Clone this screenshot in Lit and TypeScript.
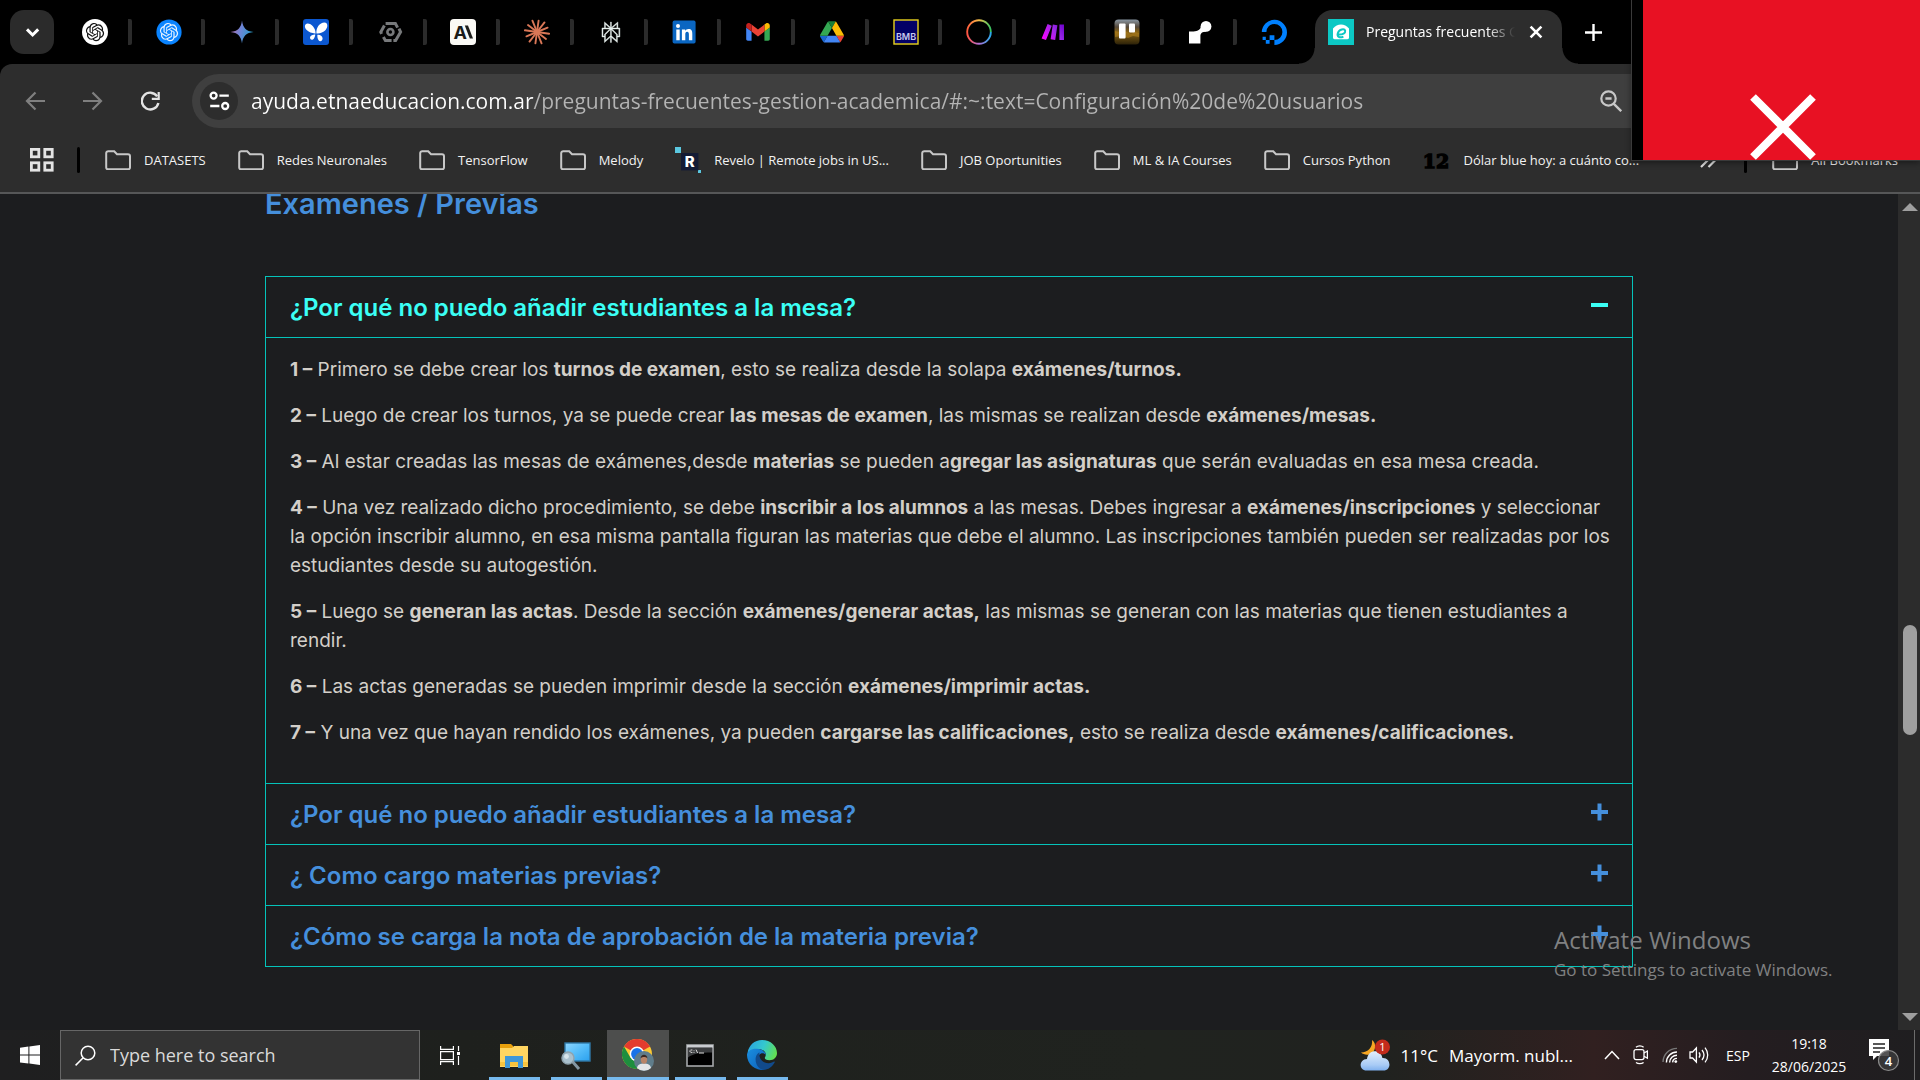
import { LitElement, html, svg, css, nothing, TemplateResult } from "lit";
import { customElement, property, state } from "lit/decorators.js";

const KNOT =
  "M22.2819 9.8211a5.9847 5.9847 0 0 0-.5157-4.9108 6.0462 6.0462 0 0 0-6.5098-2.9A6.0651 6.0651 0 0 0 4.9807 4.1818a5.9847 5.9847 0 0 0-3.9977 2.9 6.0462 6.0462 0 0 0 .7427 7.0966 5.98 5.98 0 0 0 .511 4.9107 6.051 6.051 0 0 0 6.5146 2.9001A5.9847 5.9847 0 0 0 13.2599 24a6.0557 6.0557 0 0 0 5.7718-4.2058 5.9894 5.9894 0 0 0 3.9977-2.9001 6.0557 6.0557 0 0 0-.7475-7.0729zm-9.022 12.6081a4.4755 4.4755 0 0 1-2.8764-1.0408l.1419-.0804 4.7783-2.7582a.7948.7948 0 0 0 .3927-.6813v-6.7369l2.02 1.1686a.071.071 0 0 1 .038.052v5.5826a4.504 4.504 0 0 1-4.4945 4.4944zm-9.6607-4.1254a4.4708 4.4708 0 0 1-.5346-3.0137l.142.0852 4.783 2.7582a.7712.7712 0 0 0 .7806 0l5.8428-3.3685v2.3324a.0804.0804 0 0 1-.0332.0615L9.74 19.9502a4.4992 4.4992 0 0 1-6.1408-1.6464zM2.3408 7.8956a4.485 4.485 0 0 1 2.3655-1.9728V11.6a.7664.7664 0 0 0 .3879.6765l5.8144 3.3543-2.0201 1.1685a.0757.0757 0 0 1-.071 0l-4.8303-2.7865A4.504 4.504 0 0 1 2.3408 7.872zm16.5963 3.8558L13.1038 8.364 15.1192 7.2a.0757.0757 0 0 1 .071 0l4.8303 2.7913a4.4944 4.4944 0 0 1-.6765 8.1042v-5.6772a.79.79 0 0 0-.407-.667zm2.0107-3.0231l-.142-.0852-4.7735-2.7818a.7759.7759 0 0 0-.7854 0L9.409 9.2297V6.8974a.0662.0662 0 0 1 .0284-.0615l4.8303-2.7866a4.4992 4.4992 0 0 1 6.6802 4.66zM8.3065 12.863l-2.02-1.1638a.0804.0804 0 0 1-.038-.0567V6.0742a4.4992 4.4992 0 0 1 7.3757-3.4537l-.142.0805L8.704 5.459a.7948.7948 0 0 0-.3927.6813zm1.0976-2.3654l2.602-1.4998 2.6069 1.4998v2.9994l-2.5974 1.4997-2.6067-1.4997Z";

const PERPLEXITY =
  "M22.3977 7.0896h-2.3106V.0676l-7.5094 6.3542V.1577h-1.1554v6.1966L4.4904 0v7.0896H1.6023v10.3976h2.8882V24l6.932-6.3591v6.2005h1.1554v-6.0469l6.9318 6.1807v-6.4879h2.8882V7.0896zm-3.4657-4.531v4.531h-5.355l5.355-4.531zm-13.2862.0676 4.8691 4.4634H5.6458V2.6262zM2.7576 16.332V8.245h7.8476l-6.1149 6.1147v1.9723H2.7576zm2.8882 5.0404v-3.8852h.0001v-2.6488l5.7763-5.7764v7.0111l-5.7764 5.2993zm12.7086.0248-5.7766-5.1509V9.0618l5.7766 5.7766v6.5588zm2.8882-5.0652h-1.733v-1.9723L13.3948 8.245h7.8478v8.087z";

const burst = Array.from({ length: 12 }, (_, i) => {
  const a = (i * 30 - 82) * (Math.PI / 180);
  const r = i % 2 ? 12.2 : 11.4;
  return svg`<line x1="13" y1="13" x2=${13 + r * Math.cos(a)} y2=${13 + r * Math.sin(a)}></line>`;
});

/* Favicons, all on a 26 unit grid. */
const FAVICONS: { name: string; art: TemplateResult }[] = [
  {
    name: "ChatGPT",
    art: svg`<circle cx="13" cy="13" r="13" fill="#fff"/><g transform="translate(3.9 3.9) scale(.76)"><path d=${KNOT} fill="#111"/></g>`,
  },
  {
    name: "OpenAI",
    art: svg`<circle cx="13" cy="13" r="12.6" fill="#0a84ff"/><g transform="translate(3.9 3.9) scale(.76)"><path d=${KNOT} fill="#e8f3ff"/></g>`,
  },
  {
    name: "Gemini",
    art: svg`<defs><linearGradient id="gem" x1="0" y1="0.4" x2="1" y2="0.7"><stop offset="0" stop-color="#b46fa8"/><stop offset=".4" stop-color="#6f84d6"/><stop offset="1" stop-color="#1ba1c8"/></linearGradient></defs><path d="M13 1.5C13.8 8.6 17.2 12.3 24.5 13 17.2 13.7 13.8 17.4 13 24.5 12.2 17.4 8.8 13.7 1.5 13 8.8 12.3 12.2 8.6 13 1.5z" fill="url(#gem)"/>`,
  },
  {
    name: "Butterfly",
    art: svg`<rect width="26" height="26" rx="3" fill="#0b57d0"/><path d="M12.6 14.4C12.6 9 8.6 4.8 4.6 4.6 1.4 4.8 1.2 8.6 3.4 10.8 5.8 13.2 9.4 14.6 12.6 14.4zM13.4 14.4C13 8.8 16.6 3.8 21.4 3.6 25.2 3.8 25 8.4 22.6 11 20.2 13.6 16.6 14.8 13.4 14.4z" fill="#fff"/><path d="M12.2 15.6C10 15.6 7.2 16.6 7 18.8 7.2 21.2 9.8 21.2 11 19.4 11.9 18 12.2 16.8 12.2 15.6zM14.4 15.8c2.2-.4 5 .8 5.2 3.4 0 3.2-3 4-4.2 1.8-.9-1.6-1.2-3.4-1-5.2z" fill="#fff"/>`,
  },
  {
    name: "Console",
    art: svg`<path d="M8.6 4.6h9.8l2.2 4M22 9.6l1.6 3.4-5 8.6h-2.2M14.6 21.6H8.4l-2-3.6M4.6 14.8L3.8 13l3.6-6.4" fill="none" stroke="#77797b" stroke-width="3"/><circle cx="13.4" cy="13" r="4.3" fill="#77797b"/><circle cx="13.4" cy="13" r="1.7" fill="#000"/>`,
  },
  {
    name: "Anthropic",
    art: svg`<rect width="26" height="26" rx="4" fill="#faf9f5"/><text x="3.4" y="19.5" font-family="Inter, sans-serif" font-weight="700" font-size="18" fill="#1b1b19">A</text><path d="M14.8 6.4h3.2L23 19.5h-3.2z" fill="#1b1b19"/>`,
  },
  { name: "Claude", art: svg`<g stroke="#d97757" stroke-width="1.9" stroke-linecap="round">${burst}</g>` },
  {
    name: "Perplexity",
    art: svg`<g transform="translate(2.6 2.9) scale(.86)"><path d=${PERPLEXITY} fill="#e8f0ee" stroke="#e8f0ee" stroke-width=".5"/></g>`,
  },
  {
    name: "LinkedIn",
    art: svg`<rect x="1.6" y="1.6" width="23" height="23" rx="1.8" fill="#0a66c2"/><circle cx="7" cy="7.1" r="2" fill="#fff"/><path d="M5.3 10.4h3.4v10.8H5.3zM10.9 10.4h3.3v1.5c.7-1.1 1.8-1.8 3.3-1.8 3 0 3.8 2 3.8 4.8v6.3h-3.4v-5.6c0-1.4-.2-2.8-1.8-2.8s-1.8 1.4-1.8 2.8v5.6h-3.4z" fill="#fff"/>`,
  },
  {
    name: "Gmail",
    art: svg`<g transform="translate(1.2 4) scale(.268) translate(-52 -42)"><path fill="#4285f4" d="M58 108h14V74L52 59v43c0 3.32 2.69 6 6 6"/><path fill="#34a853" d="M120 108h14c3.32 0 6-2.69 6-6V59l-20 15"/><path fill="#fbbc04" d="M120 48v26l20-15v-8c0-7.42-8.47-11.65-14.4-7.2"/><path fill="#ea4335" d="M72 74V48l24 18 24-18v26L96 92"/><path fill="#c5221f" d="M52 51v8l20 15V48l-5.6-4.2c-5.94-4.45-14.4-.22-14.4 7.2"/></g>`,
  },
  {
    name: "Drive",
    art: svg`<g transform="translate(1 2.2) scale(.274)"><path d="m6.6 66.85 3.85 6.65c.8 1.4 1.95 2.5 3.3 3.3l13.75-23.8h-27.5c0 1.55.4 3.1 1.2 4.5z" fill="#1967d2"/><path d="m43.65 25-13.75-23.8c-1.35.8-2.5 1.9-3.3 3.3l-25.4 44a9.06 9.06 0 0 0 -1.2 4.5h27.5z" fill="#34a853"/><path d="m73.55 76.8c1.35-.8 2.5-1.9 3.3-3.3l1.6-2.75 7.65-13.25c.8-1.4 1.2-2.95 1.2-4.5h-27.502l5.852 11.5z" fill="#ea4335"/><path d="m43.65 25 13.75-23.8c-1.35-.8-2.9-1.2-4.5-1.2h-18.5c-1.6 0-3.15.45-4.5 1.2z" fill="#188038"/><path d="m59.8 53h-32.3l-13.75 23.8c1.35.8 2.9 1.2 4.5 1.2h50.8c1.6 0 3.15-.45 4.5-1.2z" fill="#4285f4"/><path d="m73.4 26.5-12.7-22c-.8-1.4-1.95-2.5-3.3-3.3l-13.75 23.8 16.15 28h27.45c0-1.55-.4-3.1-1.2-4.5z" fill="#fbbc04"/></g>`,
  },
  {
    name: "BMB",
    art: svg`<rect x="1" y="1" width="24" height="24" fill="#020066" stroke="#e8d21d" stroke-width="1.4"/><text x="13" y="21" text-anchor="middle" font-family="Inter, sans-serif" font-weight="600" font-size="9" fill="#c9c9ee">BMB</text>`,
  },
  {
    name: "Ring",
    art: svg`<defs><linearGradient id="rg1" x1="0" y1="0" x2="1" y2="0"><stop offset="0" stop-color="#ff5b3c"/><stop offset=".5" stop-color="#f5c04a"/><stop offset="1" stop-color="#39c463"/></linearGradient><linearGradient id="rg2" x1="0" y1="0" x2="1" y2="0"><stop offset="0" stop-color="#ff5340"/><stop offset=".5" stop-color="#b06fd8"/><stop offset="1" stop-color="#29a9e8"/></linearGradient></defs><path d="M1.2 13a11.8 11.8 0 0 1 23.6 0" fill="none" stroke="url(#rg1)" stroke-width="1.9"/><path d="M1.2 13a11.8 11.8 0 0 0 23.6 0" fill="none" stroke="url(#rg2)" stroke-width="1.9"/>`,
  },
  {
    name: "Make",
    art: svg`<defs><linearGradient id="mk" gradientUnits="userSpaceOnUse" x1="2" y1="20" x2="24" y2="6"><stop offset="0" stop-color="#ff00ff"/><stop offset=".6" stop-color="#9b2be8"/><stop offset="1" stop-color="#6d00cc"/></linearGradient></defs><path d="M7.6 5l4.2 1.8L6 21 1.6 19.6zM12.8 5.4l4.6.8L15.2 21l-4.6-.8zM19.4 5.4H24V21h-4.6z" fill="url(#mk)"/>`,
  },
  {
    name: "Trello",
    art: svg`<defs><linearGradient id="tr" x1="0" y1="0" x2="0" y2="1"><stop offset="0" stop-color="#8a97a3"/><stop offset=".3" stop-color="#55483a"/><stop offset=".5" stop-color="#8a6413"/><stop offset="1" stop-color="#2c2209"/></linearGradient></defs><rect x=".5" y=".5" width="25" height="25" rx="4" fill="url(#tr)"/><path d="M1 12l4 1 3-2 5 2 4 2 4-2 4 1v4l-6-1-5 2-6-2-7 1z" fill="#a87a1c" opacity=".7"/><rect x="5" y="4.6" width="6.6" height="15" rx="1" fill="#fff"/><rect x="15" y="4.6" width="6" height="8.8" rx="1" fill="#fff"/>`,
  },
  {
    name: "Node",
    art: svg`<circle cx="19" cy="7.4" r="5.4" fill="#fff"/><path d="M2 12.6h3.2c3.6 0 8.6-1 8.8-5.6l5.4 5.6c-4.2.4-6 1.4-6 5v7H2z" fill="#fff"/>`,
  },
  {
    name: "DigitalOcean",
    art: svg`<path d="M13.4 26v-5A8 8 0 1 0 5.4 13H.8A12.6 12.6 0 1 1 13.4 26z" fill="#0080ff"/><path d="M8.6 16.2h4.8v4.8H8.6zM4.8 21h3.8v3.8H4.8zM1.6 17.8h3.2V21H1.6z" fill="#0080ff"/>`,
  },
];

const icon = (art: TemplateResult, w: number, h: number, box = `0 0 ${w} ${h}`) =>
  html`<svg width=${w} height=${h} viewBox=${box} aria-hidden="true">${art}</svg>`;

const FOLDER = icon(
  svg`<path d="M1.2 3.2a2 2 0 0 1 2-2h6l2.8 3h11a2 2 0 0 1 2 2v11.4a1.6 1.6 0 0 1-1.6 1.6H2.8a1.6 1.6 0 0 1-1.6-1.6z" fill="none" stroke="#c7c7c7" stroke-width="2"/>`,
  26,
  20
);

const REVELO = icon(
  svg`<path d="M0 0h6v6H0zM23 23h3v3h-3z" fill="#5bc8e0"/><rect x="6" y="6" width="17.4" height="17.4" fill="#131b35"/><text x="14.6" y="20.2" text-anchor="middle" font-family="Inter, sans-serif" font-weight="800" font-size="15" fill="#fff">R</text>`,
  26,
  26
);

const TWELVE = icon(
  svg`<text x="13" y="21" text-anchor="middle" font-family="'DejaVu Serif', serif" font-weight="700" font-size="19" fill="#000" stroke="#000" stroke-width="1.4">12</text>`,
  28,
  26
);

const BOOKMARKS = [
  { label: "DATASETS", art: FOLDER },
  { label: "Redes Neuronales", art: FOLDER },
  { label: "TensorFlow", art: FOLDER },
  { label: "Melody", art: FOLDER },
  { label: "Revelo | Remote jobs in US...", art: REVELO },
  { label: "JOB Oportunities", art: FOLDER },
  { label: "ML & IA Courses", art: FOLDER },
  { label: "Cursos Python", art: FOLDER },
  { label: "Dólar blue hoy: a cuánto co...", art: TWELVE },
];

@customElement("browser-tabs")
export class BrowserTabs extends LitElement {
  static styles = css`
    :host { display: block; background: #000; }
    svg { display: block; flex: none; }
    button { border: 0; padding: 0; background: none; color: #fff; font: inherit; display: grid; place-items: center; }
    .strip { display: flex; height: 64px; padding: 0 296px 0 10px; box-sizing: border-box; align-items: center; }
    .list { width: 44px; height: 44px; border-radius: 14px; background: #2b2b2b; flex: none; }
    .pinned { display: grid; grid-template-columns: repeat(17, 1fr); flex: 1; margin: 0 4px; min-width: 0; }
    .tab { height: 26px; border-right: 4px solid #2b2b2b; border-radius: 2px; padding-left: 4px; }
    .tab:last-child { border-color: transparent; }
    .active { position: relative; width: 247px; height: 54px; margin-top: 10px; flex: none; background: #2d2d2d; border-radius: 18px 18px 0 0; display: flex; align-items: center; padding: 0 17px 10px 13px; box-sizing: border-box; gap: 12px; }
    .active::before, .active::after { content: ""; position: absolute; bottom: 0; width: 16px; height: 16px; }
    .active::before { right: 100%; background: radial-gradient(circle at 0 0, transparent 15px, #2d2d2d 16px); }
    .active::after { left: 100%; background: radial-gradient(circle at 100% 0, transparent 15px, #2d2d2d 16px); }
    .title { flex: 1; overflow: hidden; white-space: nowrap; font-size: 14px; line-height: 20px; color: #fff; mask-image: linear-gradient(to right, #000 calc(100% - 28px), transparent); }
    .close { width: 18px; height: 18px; }
    .new { width: 62px; height: 44px; flex: none; }
  `;
  render() {
    return html`
      <div class="strip">
        <button class="list" aria-label="Search tabs">
          ${icon(svg`<path d="M2 2.4l5.6 5.6 5.6-5.6" fill="none" stroke="#fff" stroke-width="3"/>`, 15, 11)}
        </button>
        <nav class="pinned" aria-label="Tabs">
          ${FAVICONS.map((f) => html`<button class="tab" aria-label=${f.name}>${icon(f.art, 26, 26)}</button>`)}
        </nav>
        <div class="active">
          ${icon(
            svg`<rect width="26" height="26" fill="#0cc8c4"/><path d="M5 9.4C7.4 6.8 9.8 5.4 13 5.4S18.6 6.8 21 9.4V18.6c0 1-.6 1.6-1.6 1.6H6.6c-1 0-1.6-.6-1.6-1.6z" fill="#fff"/><path d="M10.4 15.6c4.4.2 7.2-1.6 6.8-3.8-.6-2.4-6-2-7.4 2.4-1 3.4 1.8 5.2 5.6 3.4" fill="none" stroke="#0cc8c4" stroke-width="2"/>`,
            26,
            26
          )}
          <span class="title">Preguntas frecuentes Gestión</span>
          <button class="close" aria-label="Close tab">
            ${icon(svg`<path d="M1.6 1.6l10.8 10.8M12.4 1.6L1.6 12.4" stroke="#fff" stroke-width="2.6"/>`, 14, 14)}
          </button>
        </div>
        <button class="new" aria-label="New tab">
          ${icon(svg`<path d="M8.5 0v17M0 8.5h17" stroke="#fff" stroke-width="2.4"/>`, 17, 17)}
        </button>
      </div>
    `;
  }
}

@customElement("browser-toolbar")
export class BrowserToolbar extends LitElement {
  static styles = css`
    :host { display: block; background: #000; }
    svg { display: block; flex: none; }
    button { border: 0; padding: 0; background: none; color: #fff; font: inherit; display: grid; place-items: center; flex: none; }
    .panel { background: #2d2d2d; border-bottom: 2px solid #565758; border-radius: 12px 0 0 0; }
    .row { display: flex; align-items: center; padding: 10px 120px 0 6px; }
    .nav { width: 58px; height: 54px; }
    .pill { flex: 1; display: flex; align-items: center; height: 54px; margin-left: 12px; border-radius: 27px; background: #3f3f3f; padding: 0 178px 0 8px; min-width: 0; }
    .site { width: 38px; height: 38px; border-radius: 50%; background: #2d2d2d; }
    .url { flex: 1; min-width: 0; border: 0; outline: 0; padding: 0; margin-left: 13px; height: 38px; font-family: inherit; font-size: 21px; color: #b4b4b4; background: linear-gradient(to right, #fff 283px, #b4b4b4 283px); background-clip: text; -webkit-text-fill-color: transparent; }
    .marks { display: flex; align-items: center; height: 64px; padding: 0 22px 0 30px; }
    .rule { width: 3px; height: 26px; background: #000; flex: none; border-radius: 2px; margin: 0 25px 0 23px; }
    .list { display: flex; gap: 32px; flex: 1; min-width: 0; }
    .mark { display: flex; align-items: center; gap: 13px; height: 26px; color: #f2f2f2; text-decoration: none; font-size: 13px; white-space: nowrap; }
    .more { width: 26px; height: 26px; }
  `;
  @property() url = "ayuda.etnaeducacion.com.ar/preguntas-frecuentes-gestion-academica/#:~:text=Configuración%20de%20usuarios";
  render() {
    return html`
      <div class="panel">
        <div class="row">
          <button class="nav" aria-label="Back">${icon(svg`<path d="M10.5 1.5l-8.5 8.5 8.5 8.5M2 10h18" fill="none" stroke="#7f7f7f" stroke-width="2.2"/>`, 20, 20)}</button>
          <button class="nav" aria-label="Forward">${icon(svg`<path d="M9.5 1.5l8.5 8.5-8.5 8.5M18 10H0" fill="none" stroke="#7f7f7f" stroke-width="2.2"/>`, 20, 20)}</button>
          <button class="nav" aria-label="Reload">${icon(svg`<path d="M16.2 5.4A8.4 8.4 0 1 0 17.4 12" fill="none" stroke="#e3e3e3" stroke-width="2.4"/><path d="M18.8 1v8h-8V6.8h5.8V1z" fill="#e3e3e3"/>`, 20, 20)}</button>
          <div class="pill">
            <button class="site" aria-label="Site information">${icon(
              svg`<g fill="none" stroke="#fff" stroke-width="2.3"><circle cx="4.6" cy="4.6" r="3"/><path d="M10.4 4.6h9.4M1.2 15h9.2"/><circle cx="16.2" cy="15" r="3"/></g>`,
              21,
              20
            )}</button>
            <input class="url" aria-label="Address" .value=${this.url} />
            <button aria-label="Zoom level">${icon(
              svg`<circle cx="8.5" cy="8.5" r="7.2" fill="none" stroke="#c7c7c7" stroke-width="2.2"/><path d="M5.4 8.5h6.2M13.6 13.6l7.6 7.6" stroke="#c7c7c7" stroke-width="2.4"/>`,
              22,
              22
            )}</button>
          </div>
        </div>
        <div class="marks">
          <button aria-label="Apps">${icon(
            svg`<g fill="none" stroke="#e3e3e3" stroke-width="2.8"><rect x="1.4" y="1.4" width="7.4" height="7.4"/><rect x="14.8" y="1.4" width="7.4" height="7.4"/><rect x="1.4" y="14.8" width="7.4" height="7.4"/><rect x="14.8" y="14.8" width="7.4" height="7.4"/></g>`,
            24,
            24
          )}</button>
          <span class="rule"></span>
          <nav class="list" aria-label="Bookmarks">
            ${BOOKMARKS.map((b) => html`<a class="mark" href="#">${b.art}<span>${b.label}</span></a>`)}
          </nav>
          <button class="more" aria-label="More bookmarks">${icon(
            svg`<path d="M2 1l7 7-7 7M9.5 1l7 7-7 7" fill="none" stroke="#e3e3e3" stroke-width="2.2"/>`,
            18,
            16
          )}</button>
          <span class="rule"></span>
          <a class="mark" href="#">${FOLDER}<span>All Bookmarks</span></a>
        </div>
      </div>
    `;
  }
}

interface Faq {
  title: string;
  body: TemplateResult[];
}

const FAQS: Faq[] = [
  {
    title: "¿Por qué no puedo añadir estudiantes a la mesa?",
    body: [
      html`<b>1 –</b> Primero se debe crear los <b>turnos de examen</b>, esto se realiza desde la solapa <b>exámenes/turnos.</b>`,
      html`<b>2 –</b> Luego de crear los turnos, ya se puede crear <b>las mesas de examen</b>, las mismas se realizan desde <b>exámenes/mesas.</b>`,
      html`<b>3 –</b> Al estar creadas las mesas de exámenes,desde <b>materias</b> se pueden a<b>gregar las asignaturas</b> que serán evaluadas en esa mesa creada.`,
      html`<b>4 –</b> Una vez realizado dicho procedimiento, se debe <b>inscribir a los alumnos</b> a las mesas. Debes ingresar a <b>exámenes/inscripciones</b> y seleccionar la opción inscribir alumno, en esa misma pantalla figuran las materias que debe el alumno. Las inscripciones también pueden ser realizadas por los estudiantes desde su autogestión.`,
      html`<b>5 –</b> Luego se <b>generan las actas</b>. Desde la sección <b>exámenes/generar actas,</b> las mismas se generan con las materias que tienen estudiantes a rendir.`,
      html`<b>6 –</b> Las actas generadas se pueden imprimir desde la sección <b>exámenes/imprimir actas.</b>`,
      html`<b>7 –</b> Y una vez que hayan rendido los exámenes, ya pueden <b>cargarse las calificaciones,</b> esto se realiza desde <b>exámenes/calificaciones.</b>`,
    ],
  },
  { title: "¿Por qué no puedo añadir estudiantes a la mesa?", body: [] },
  { title: "¿ Como cargo materias previas?", body: [] },
  { title: "¿Cómo se carga la nota de aprobación de la materia previa?", body: [] },
];

@customElement("faq-page")
export class FaqPage extends LitElement {
  static styles = css`
    :host { display: flex; min-height: 0; overflow: hidden; background: #1c1d1f; font-family: Inter, "Noto Sans", sans-serif; }
    svg { display: block; flex: none; }
    .page { flex: 1; min-width: 0; padding: 0 24px; }
    .inner { max-width: 1368px; margin: 0 auto; }
    h2 { margin: 0 0 62px; font-size: 29px; line-height: 20px; font-weight: 600; color: #458fdc; }
    .box { border: 1px solid #05c3ba; }
    .item + .item { border-top: 1px solid #05c3ba; }
    h3 { margin: 0; }
    .head { width: 100%; height: 60px; display: flex; align-items: center; justify-content: space-between; padding: 0 24px; border: 0; background: none; color: #458fdc; font: inherit; font-size: 24px; font-weight: 600; text-align: left; }
    .head.open { color: #3bfff5; }
    .body { border-top: 1px solid #05c3ba; padding: 17px 16px 19px 24px; color: #d3cfc9; font-size: 19px; line-height: 29px; }
    p { margin: 0 0 17px; }
    .scroll { width: 22px; flex: none; background: #2c2c2c; display: flex; flex-direction: column; align-items: center; padding: 9px 0 9px 2px; box-sizing: border-box; gap: 13px; }
    .track { flex: 1; display: grid; grid-template-rows: 517fr 141fr 342fr; }
    .thumb { grid-row: 2; width: 14px; border-radius: 7px; background: #9f9f9f; }
  `;
  @state() open = 0;
  render() {
    return html`
      <main class="page">
        <div class="inner">
          <h2>Examenes / Previas</h2>
          <div class="box">
            ${FAQS.map((f, i) => {
              const open = i === this.open;
              return html`
                <section class="item">
                  <h3>
                    <button class="head ${open ? "open" : ""}" aria-expanded=${open} @click=${() => (this.open = open ? -1 : i)}>
                      <span>${f.title}</span>
                      ${icon(
                        svg`<path d=${open ? "M0 9h17" : "M0 9h17M8.5 .5v17"} stroke="currentColor" stroke-width="4"/>`,
                        17,
                        22
                      )}
                    </button>
                  </h3>
                  ${open && f.body.length ? html`<div class="body">${f.body.map((p) => html`<p>${p}</p>`)}</div>` : nothing}
                </section>
              `;
            })}
          </div>
        </div>
      </main>
      <div class="scroll">
        ${icon(svg`<path d="M8 0l8 8H0z" fill="#9f9f9f"/>`, 16, 8)}
        <div class="track"><div class="thumb"></div></div>
        ${icon(svg`<path d="M8 8l8-8H0z" fill="#9f9f9f"/>`, 16, 8)}
      </div>
    `;
  }
}

const APPS = [
  {
    name: "File Explorer",
    active: false,
    art: icon(
      svg`<path d="M1 4h11l2 2v4H1z" fill="#e8a00c"/><path d="M1 8h12l2-2h14v21H1z" fill="#ffd561"/><path d="M1 22h28v4H1z" fill="#f7c33e"/><path d="M6 28V16h18v12h-5v-6h-8v6z" fill="#3f97d8"/>`,
      30,
      30
    ),
  },
  {
    name: "Remote view",
    active: false,
    art: icon(
      svg`<defs><linearGradient id="rv" x1="0" y1="0" x2="1" y2="1"><stop offset="0" stop-color="#8fd6ff"/><stop offset=".5" stop-color="#55bdf9"/><stop offset="1" stop-color="#2aa0ee"/></linearGradient></defs><rect x="5" y="3" width="25" height="18" fill="url(#rv)" stroke="#2f79a8" stroke-width="1.4"/><path d="M12 21l7 8" stroke="#8497a3" stroke-width="3"/><circle cx="8" cy="18" r="6" fill="#a9c0cd" stroke="#8fa3ae" stroke-width="1.5"/><circle cx="6.5" cy="16.5" r="2.4" fill="#d7e4ea"/>`,
      32,
      30
    ),
  },
  {
    name: "Chrome",
    active: true,
    art: icon(
      svg`<circle cx="15" cy="15" r="15" fill="#fcc934"/><path d="M15 15L2 7.5A15 15 0 0 1 28 7.5z" fill="#e33b2e"/><path d="M2 7.5A15 15 0 0 0 15 30l6.5-11.3L8.5 18.7z" fill="#1e8e3e"/><path d="M15 8h13.2a15 15 0 0 0-.2-.5L15 5z" fill="#e33b2e"/><circle cx="15" cy="15" r="7.4" fill="#fff"/><circle cx="15" cy="15" r="5.9" fill="#1a73e8"/><circle cx="22" cy="22" r="10" fill="#607d8b"/><path d="M15 29c.6-3.4 3.2-4.4 7-4.4s6.2 1 7 4.4a10 10 0 0 1-14 0z" fill="#e4e6e8"/><ellipse cx="22" cy="20.6" rx="3.2" ry="4.2" fill="#b98468"/><path d="M18.6 19.4c0-5 6.8-5 6.8 0-1-2-5.8-2-6.8 0z" fill="#3a2a24"/>`,
      32,
      32
    ),
  },
  {
    name: "Command Prompt",
    active: false,
    art: icon(
      svg`<rect x="1" y="1" width="26" height="21" fill="#000" stroke="#a5a8ab" stroke-width="1.6"/><path d="M1 1h26v2.6H1z" fill="#c9ccd0"/><path d="M2 4h24v4.4C15 8.4 6 9.6 2 13.6z" fill="#3a3c3e"/><path d="M4.6 6h1.8M4.6 8.4h1.8M4 6.4v1.6M8 6.4v.8M8 8v.8M10 5.6l1.6 3.4M13 9h5" stroke="#ddd" stroke-width="1"/>`,
      28,
      23
    ),
  },
  {
    name: "Edge",
    active: false,
    art: icon(
      svg`<defs><linearGradient id="e1" x1="0" y1=".3" x2="1" y2=".6"><stop offset="0" stop-color="#2aa5e0"/><stop offset=".5" stop-color="#34c8cf"/><stop offset="1" stop-color="#63e04f"/></linearGradient><linearGradient id="e2" x1="0" y1="0" x2="1" y2="1"><stop offset="0" stop-color="#1a8fe0"/><stop offset="1" stop-color="#0d5fb8"/></linearGradient></defs><path d="M.6 12.8C1.6 5.4 7.6 0 15 0c8.8 0 15 6.2 15 13 0 4.6-3.4 7.2-7.4 7.2-3.4 0-4.8-1.4-4.8-2.2 0-.8 1-1.4 1-3.4 0-3-3-5.4-7-5.4C6.6 9.2 2.4 11 .6 12.8z" fill="url(#e1)"/><path d="M0 15C0 11 5 8.2 10.2 8.8c4 .4 8.6 2.6 8.6 6-1.6-2-5-2.4-6.6.2-1.4 2.4-.6 7.4 4 11.8l1 3A15 15 0 0 1 0 15z" fill="url(#e2)"/><path d="M8.6 19.6c0-4 2-6.6 4-7.2-1.4 5 2.4 10.8 8.8 10.8 2.8 0 4.6-1 5.6-1.6.6-.3 1 .2.6.8C25.2 26.8 21.4 29.6 16.4 30c-4.2-.4-7.8-5-7.8-10.4z" fill="#114a8b"/>`,
      30,
      30
    ),
  },
];

@customElement("task-bar")
export class TaskBar extends LitElement {
  static styles = css`
    :host { display: block; color: #fff; background: linear-gradient(to right, #1f1f20 0, #1e201d 24%, #20231f 60%, #20221f 72%, #312020 83%, #241d20 91%, #1f1e20 100%); }
    svg { display: block; flex: none; }
    button { border: 0; padding: 0; background: none; color: #fff; font: inherit; display: grid; place-items: center; flex: none; }
    .bar { display: flex; height: 50px; align-items: stretch; }
    .start { width: 60px; }
    .search { width: 360px; box-sizing: border-box; border: 1px solid #666; background: #333; display: flex; align-items: center; gap: 14px; padding: 0 14px; }
    .search input { flex: 1; min-width: 0; border: 0; outline: 0; padding: 0; background: none; color: #fff; font-family: inherit; font-size: 18px; height: 30px; }
    .search input::placeholder { color: #dadada; opacity: 1; }
    .view { width: 60px; margin-right: 3px; }
    .app { width: 62px; position: relative; }
    .app::after { content: ""; position: absolute; left: 6px; right: 5px; bottom: 0; height: 3px; background: #76b9ed; }
    .app.on { background: #4d4e4d; }
    .app.on::after { left: 0; right: 0; }
    .tray { display: flex; margin-left: auto; align-items: stretch; }
    .weather { display: flex; align-items: center; gap: 11px; font-size: 17px; margin-right: 24px; white-space: nowrap; }
    .small { width: 29px; }
    .lang { width: 50px; font-size: 14px; }
    .clock { width: 92px; font-size: 14px; line-height: 23px; align-content: center; text-align: center; }
    .note { width: 60px; border-right: 1px solid #6b6b6b; margin-right: 5px; }
  `;
  render() {
    return html`
      <footer class="bar">
        <button class="start" aria-label="Start">${icon(svg`<path d="M0 2.8l8.4-1.2v8H0zM9.4 1.4L20 0v9.6H9.4zM0 10.6h8.4v8L0 17.4zM9.4 10.6H20V20L9.4 18.6z" fill="#fff"/>`, 20, 20)}</button>
        <label class="search">
          ${icon(svg`<circle cx="13" cy="8" r="6.8" fill="none" stroke="#fff" stroke-width="1.5"/><path d="M8.2 12.8L.6 20.4" stroke="#fff" stroke-width="1.5"/>`, 21, 21)}
          <input type="text" aria-label="Search" placeholder="Type here to search" />
        </label>
        <button class="view" aria-label="Task view">${icon(
          svg`<g fill="none" stroke="#fff" stroke-width="1.2"><path d="M.6 0v3.4h12.8V0M.6 19v-3.4h12.8V19M.6 5.6h12.8v8H.6zM18.5 0v5M18.5 10v9"/></g><path d="M17 6h3v3h-3z" fill="#fff"/>`,
          20,
          19
        )}</button>
        ${APPS.map((a) => html`<button class="app ${a.active ? "on" : ""}" aria-label=${a.name}>${a.art}</button>`)}
        <div class="tray">
          <button class="weather">
            ${icon(
              svg`<defs><linearGradient id="cl" x1="0" y1="0" x2="0" y2="1"><stop offset="0" stop-color="#e3effc"/><stop offset=".7" stop-color="#a9ccf6"/><stop offset="1" stop-color="#7fb0ee"/></linearGradient></defs><path d="M12 1c5 3 4 13-3 14.6-3 .8-6-.4-8-2C8 13.6 13 8 12 1z" fill="#f5a623"/><path d="M6.6 31.6c-8 0-8-11.2.4-11.6C8 10 21 9.6 22.4 19c8.8-.6 9.6 12.6 1 12.6z" fill="url(#cl)"/><circle cx="22.4" cy="8" r="7.6" fill="#c42b1c"/><text x="22.4" y="12" text-anchor="middle" font-family="'Open Sans', sans-serif" font-size="11" fill="#fff">1</text>`,
              30,
              32
            )}
            <span>11°C</span><span>Mayorm. nubl...</span>
          </button>
          <button class="small" aria-label="Show hidden icons">${icon(svg`<path d="M1 9l7-7.5L15 9" fill="none" stroke="#fff" stroke-width="1.5"/>`, 16, 10)}</button>
          <button class="small" aria-label="Meet now">${icon(
            svg`<g fill="none" stroke="#fff" stroke-width="1.3"><rect x="1" y="4.6" width="10" height="10" rx="2"/><path d="M11 8l3.4-2v7.2L11 11.2M3 2.2C5 .4 8.6.4 10.6 2.2M3 17.4c2 1.6 5.6 1.6 7.6 0"/></g>`,
            15,
            20
          )}</button>
          <button class="small" aria-label="Wireless">${icon(
            svg`<g fill="none" stroke-width="1.4"><path d="M1 15A14 14 0 0 1 15 1.4" stroke="#777"/><path d="M4.4 15.4A10.6 10.6 0 0 1 15 5M7.6 15.4A7.4 7.4 0 0 1 15 8.2M10.6 15.4A4.4 4.4 0 0 1 15 11.4" stroke="#fff"/></g><circle cx="13.8" cy="14.6" r="1.4" fill="#fff"/>`,
            16,
            17
          )}</button>
          <button class="small" aria-label="Volume">${icon(
            svg`<g fill="none" stroke="#fff" stroke-width="1.3"><path d="M1 6h2.6L7.4 2v14L3.6 12H1z"/><path d="M10 6.4c1.2 1.6 1.2 3.6 0 5.2M13 4c2.4 3 2.4 7 0 10M16 1.6c3.6 4.4 3.6 10.4 0 14.8"/></g>`,
            20,
            18
          )}</button>
          <button class="lang">ESP</button>
          <button class="clock"><span>19:18</span><span>28/06/2025</span></button>
          <button class="note" aria-label="Notifications">${icon(
            svg`<path d="M0 0h20v17H8l-4 4v-4H0z" fill="#fff"/><path d="M4 5h12M4 9h12M4 13h7" stroke="#222" stroke-width="1.3"/><circle cx="19.5" cy="21.5" r="10" fill="#3a3a3bdd" stroke="#8a8a8a" stroke-width="1.2"/><text x="19.5" y="26.5" text-anchor="middle" font-family="'Open Sans', sans-serif" font-weight="600" font-size="13" fill="#fff">4</text>`,
            31,
            33
          )}</button>
        </div>
      </footer>
    `;
  }
}

@customElement("app-root")
export class AppRoot extends LitElement {
  static styles = css`
    :host { display: flex; flex-direction: column; position: relative; height: 100vh; overflow: hidden; background: #1c1d1f; font-family: "Open Sans", "Noto Sans", sans-serif; }
    faq-page { flex: 1; }
    .magnified { position: absolute; top: 0; right: 0; width: 289px; height: 161px; box-sizing: border-box; border: 1px solid #3a3a3a; border-width: 0 0 1px 1px; background: #000; padding: 0 0 0 11px; display: flex; box-shadow: 0 2px 6px #0006; }
    .shut { flex: 1; border: 0; padding: 0 0 0 107px; background: #e81123; display: flex; align-items: flex-end; }
    .shut svg { display: block; }
    .notice { position: absolute; right: 82px; bottom: 96px; width: 284px; color: #808182; white-space: nowrap; pointer-events: none; }
    .big { font-size: 24px; line-height: 32px; }
    .sub { font-size: 17px; line-height: 28px; }
  `;
  render() {
    return html`
      <browser-tabs></browser-tabs>
      <browser-toolbar></browser-toolbar>
      <faq-page></faq-page>
      <task-bar></task-bar>
      <div class="notice">
        <div class="big">Activate Windows</div>
        <div class="sub">Go to Settings to activate Windows.</div>
      </div>
      <div class="magnified">
        <button class="shut" aria-label="Close">
          ${icon(svg`<path d="M3 3l60 60M63 3L3 63" stroke="#fff" stroke-width="8"/>`, 66, 66)}
        </button>
      </div>
    `;
  }
}
